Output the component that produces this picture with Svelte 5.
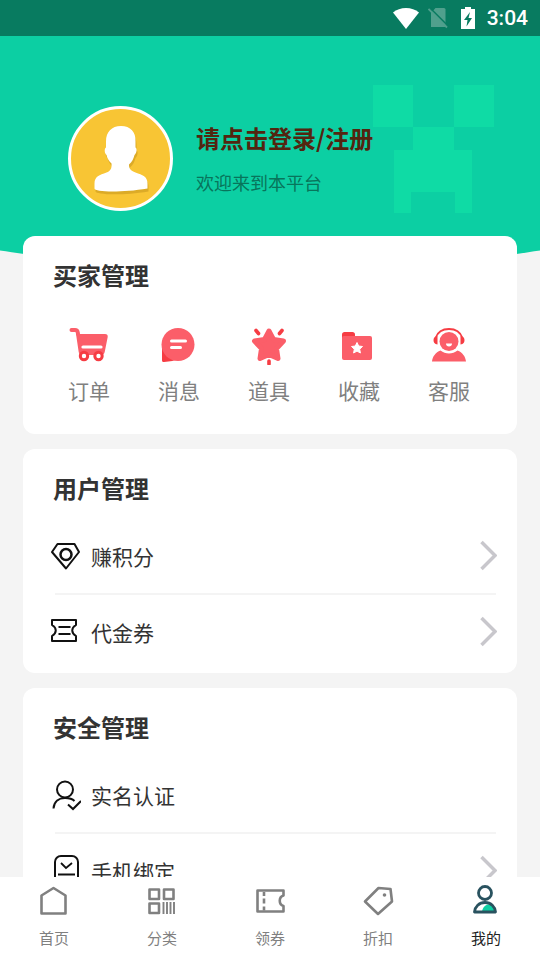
<script>
    let active = 'mine'

    const buyer = [
        {id: 'order', label: '订单'},
        {id: 'message', label: '消息'},
        {id: 'props', label: '道具'},
        {id: 'favorite', label: '收藏'},
        {id: 'service', label: '客服'}
    ]

    const sections = [
        {
            title: '用户管理',
            rows: [
                {id: 'points', label: '赚积分', arrow: true},
                {id: 'voucher', label: '代金券', arrow: true}
            ]
        },
        {
            title: '安全管理',
            rows: [
                {id: 'realname', label: '实名认证', arrow: false},
                {id: 'phone', label: '手机绑定', arrow: true}
            ]
        }
    ]

    const tabs = [
        {id: 'home', label: '首页'},
        {id: 'category', label: '分类'},
        {id: 'coupon', label: '领券'},
        {id: 'discount', label: '折扣'},
        {id: 'mine', label: '我的'}
    ]
</script>

<div class="app">
    <header class="status">
        <svg width="26" height="21" viewBox="0 0 26 21" aria-hidden="true">
            <path d="M0 4.5C3.5 1.5 8 0 13 0s9.5 1.5 13 4.5L13 21z" fill="#fff"/>
        </svg>
        <svg class="sim" width="21" height="22" viewBox="0 0 21 22" aria-hidden="true">
            <path d="M7.500 1H16a1.500 1.500 0 0 1 1.500 1.500V20H3V6z" fill="#50a08d"/>
            <path d="M1.500 .5l19 19" stroke="#087b60" stroke-width="1.600"/>
            <path d="M.5 2l18.500 18.500" stroke="#50a08d" stroke-width="1.800"/>
        </svg>
        <svg class="battery" width="14" height="22" viewBox="0 0 14 22" aria-hidden="true">
            <path d="M4 0h6v2h4v20H0V2h4z" fill="#fff"/>
            <path d="M9 5L3 13h3.500l-1 6.500L11 11H7.500z" fill="#087b60"/>
        </svg>
        <time>3:04</time>
    </header>

    <main>
        <section class="hero">
            <svg class="avatar" viewBox="0 0 105 105" role="img" aria-label="头像">
                <circle cx="52.5" cy="52.5" r="51" fill="#f8c534" stroke="#fff" stroke-width="3"/>
                <path transform="translate(1 3)" fill="#c99a20" opacity=".6" d="M52.5 20c-9.500 0-14.500 6-14.500 15.500v6c-2 1-1.500 6 .5 7.500 1 4 2.500 6 5 8.500.5 5-1 7.500-5 9-7 2.500-12 4-12 11v5c0 3 26 4.500 53 0v-5c0-7-5-8.500-12-11-5-2-6.500-4-6.500-8 3.500-3 4.500-6 5.500-9.500 2-1.500 3-6.500 1-7.500v-6C67.500 26 62 20 52.500 20z"/>
                <path fill="#fff" d="M53 20c-9.500 0-15 6-15 15.500v6c-2 1-1.500 6 .5 7.500 1 4 2.500 6 5 8.500.5 5-1 7.500-5 9-7 2.500-12 4-12 11v5c0 3.500 26 4.500 53 0v-5c0-7-5-8.500-12-11-5-2-6.500-4-6.500-8 3.500-3 4.500-6 5.500-9.500 2-1.500 3-6.500 1-7.500v-6C68 26 62.500 20 53 20z"/>
            </svg>
            <div class="intro">
                <a class="login" href="#login">请点击登录/注册</a>
                <p>欢迎来到本平台</p>
            </div>
            <svg class="creeper" width="121" height="128" viewBox="0 0 121 128" aria-hidden="true">
                <path fill="#0fdba5" d="M0 0h40v42h41V0h40v42H81v23h18v63H82v-21H38v21H21V65h19V42H0z"/>
            </svg>
        </section>

        <div class="cards">
            <section class="card">
                <h2>买家管理</h2>
                <div class="grid">
                    {#each buyer as item}
                        <button class="entry">
                            <svg width="40" height="40" viewBox="0 0 40 40" aria-hidden="true">
                                {#if item.id === 'order'}
                                    <path d="M2.500 5H6c1.500 0 2.500.8 2.800 2.500L9 9" fill="none" stroke="#fb5e69" stroke-width="4" stroke-linecap="round"/>
                                    <path d="M7 9h29c2 0 3 1.200 2.700 3l-3 15c-.4 2-1.700 3-3.700 3H13c-2 0-3-1-3.300-3z" fill="#fb5e69"/>
                                    <path d="M14 22h18" stroke="#fff" stroke-width="3.200" stroke-linecap="round"/>
                                    <circle cx="15" cy="31" r="3.700" fill="#fff" stroke="#f63c43" stroke-width="3"/>
                                    <circle cx="29.500" cy="31" r="3.700" fill="#fff" stroke="#f63c43" stroke-width="3"/>
                                {:else if item.id === 'message'}
                                    <path d="M3 19v16c0 1.500.7 2.200 2 2 6-.5 11-1 15-4z" fill="#f63c43"/>
                                    <circle cx="19" cy="19.500" r="16.500" fill="#fb5e69"/>
                                    <path d="M12.500 16h14M12.500 22.500h9" stroke="#fff" stroke-width="3" stroke-linecap="round"/>
                                {:else if item.id === 'props'}
                                    <path d="M20 6l4.500 8.500 10 1.500-7 7.500 1.500 10-9-4-9 4 1.500-10-7-7.500 10-1.500z" fill="#fb5e69" stroke="#fb5e69" stroke-width="5" stroke-linejoin="round"/>
                                    <path d="M7 5.500l2.500 3M33 5.500l-2.500 3M20 36v3" stroke="#f63c43" stroke-width="3.600" stroke-linecap="round"/>
                                {:else if item.id === 'favorite'}
                                    <path d="M3 13V9.500C3 8 4 7 5.500 7h8C15 7 16 8 16 9.500V13z" fill="#f63c43"/>
                                    <rect x="3" y="11" width="30" height="24" rx="2" fill="#fb5e69"/>
                                    <path d="M18 17.500l1.700 3.500 3.800.5-2.800 2.700.7 3.800-3.400-1.900-3.400 1.900.7-3.800-2.800-2.700 3.800-.5z" fill="#fff" stroke="#fff" stroke-linejoin="round"/>
                                {:else}
                                    <path d="M6.500 13C9 6 14 4 20 4S31 6 33.500 13" fill="none" stroke="#f63c43" stroke-width="1.800"/>
                                    <path d="M8.500 11v8.500C5.500 19 4.500 17.500 4.500 15s1.500-3.500 4-4zM31.500 11v8.500c3-.5 4-2 4-4.500s-1.500-3.500-4-4z" fill="#f63c43"/>
                                    <circle cx="20" cy="16.500" r="9.500" fill="#fb5e69"/>
                                    <path d="M17 18.500h6c0 1.800-1.200 3-3 3s-3-1.200-3-3z" fill="#fff"/>
                                    <path d="M3 36.500c.5-5 3.500-9 8.500-11 5 4 12 4 17 0 5 2 8 6 8.500 11z" fill="#fb5e69"/>
                                {/if}
                            </svg>
                            <span>{item.label}</span>
                        </button>
                    {/each}
                </div>
            </section>

            {#each sections as section}
                <section class="card">
                    <h2>{section.title}</h2>
                    <ul>
                        {#each section.rows as row}
                            <li>
                                <button class="row">
                                    <svg width="32" height="32" viewBox="0 0 32 32" fill="none" stroke="#111" stroke-width="2" aria-hidden="true">
                                        {#if row.id === 'points'}
                                            <path d="M8.500 4h17L30 12 17 28.500 3 12z" stroke-linejoin="round"/>
                                            <circle cx="17" cy="14.500" r="5.500" stroke-width="2.500"/>
                                        {:else if row.id === 'voucher'}
                                            <path d="M3 4h24v5c-5 3-5 8 0 11v5H3v-5c5-3 5-8 0-11z" stroke-linejoin="round"/>
                                            <path d="M9.500 11h12M9.500 18h12" stroke-width="1.800"/>
                                        {:else if row.id === 'realname'}
                                            <circle cx="16" cy="10.500" r="8"/>
                                            <path d="M4.500 29.500C5 22.500 10 19 16 19c4 0 7.500 1 9.500 3M19 25.500l5 4.500 8-8"/>
                                        {:else}
                                            <rect x="6" y="1" width="23" height="29" rx="6"/>
                                            <path d="M12 8l5 5L23 8M9 19.500h17" stroke-width="1.800"/>
                                        {/if}
                                    </svg>
                                    <span>{row.label}</span>
                                    {#if row.arrow}
                                        <svg class="arrow" width="18" height="32" viewBox="0 0 18 32" aria-hidden="true">
                                            <path d="M2.500 2L16 15.500 2.500 29" fill="none" stroke="#c8c7cc" stroke-width="3.500"/>
                                        </svg>
                                    {/if}
                                </button>
                            </li>
                        {/each}
                    </ul>
                </section>
            {/each}
        </div>
    </main>

    <nav>
        {#each tabs as tab}
            <button class="tab" class:active={active === tab.id} on:click={() => active = tab.id}>
                <svg width="32" height="32" viewBox="0 0 32 32" fill="none" stroke="#808080" stroke-width="2.600" aria-hidden="true">
                    {#if tab.id === 'home'}
                        <path d="M3.500 10.500L15.500 3l12 7.500V28.500h-24z" stroke-linejoin="round"/>
                    {:else if tab.id === 'category'}
                        <path d="M3.500 4.500h9.500v9.500H3.500zM18 4.500h9.500v9.500H18zM3.500 18.500h9.500v9.500H3.500z" stroke-linejoin="round"/>
                        <path d="M17.500 17v12M21 17v12M24.500 17v12M28 17v12" stroke-width="1.900"/>
                    {:else if tab.id === 'coupon'}
                        <path d="M3.500 5.500h26v5c-5 1.500-5 9 0 10.500v5.500h-26z" stroke-linejoin="round"/>
                        <path d="M10 7v4M10 13.500v5M10 21.500v4"/>
                    {:else if tab.id === 'discount'}
                        <path d="M16.500 3l12 1 1.500 12.500L16 29 3 16.500z" stroke-linejoin="round"/>
                        <circle cx="22.500" cy="10" r="1.800" fill="#808080" stroke="none"/>
                    {:else}
                        <path d="M12 27.500c0-5 4-9 9-8.500 3 2 4.500 5 4.500 8.500z" fill="#0ecfa3" stroke="none"/>
                        <circle cx="15" cy="8" r="6.500" stroke="#29525f" stroke-width="2.800"/>
                        <path d="M4.500 27C5 21.500 9 17.500 15 17.500S25 21.500 25.500 27z" stroke="#29525f" stroke-width="2.800" stroke-linejoin="round"/>
                    {/if}
                </svg>
                <span>{tab.label}</span>
            </button>
        {/each}
    </nav>
</div>

<style>
    :global(body) {
        background-color: #f4f4f4;
    }

    .app {
        display: flex;
        flex-direction: column;
        height: 100vh;
        font-family: "Noto Sans CJK SC", sans-serif;
        color: #333;
    }

    button {
        padding: 0;
        border: none;
        background: none;
        font: inherit;
        color: inherit;
        cursor: pointer;
    }

    svg {
        flex: none;
        display: block;
    }

    .status {
        display: flex;
        flex: none;
        justify-content: flex-end;
        align-items: center;
        height: 36px;
        padding-right: 12px;
        background-color: #087b60;
        color: #fff;
        font: 500 21px/36px Roboto, sans-serif;
    }

    .sim {
        margin-left: 9px;
    }

    .battery {
        margin: 0 12px;
    }

    main {
        flex: 1;
        min-height: 0;
        overflow-y: auto;
        scrollbar-width: none;
    }

    .hero {
        display: flex;
        align-items: flex-start;
        box-sizing: border-box;
        height: 234px;
        padding: 49px 47px 0 68px;
        background-color: #0ccfa3;
        clip-path: ellipse(125% 100% at 50% 0);
    }

    .avatar {
        width: 105px;
        height: 105px;
        margin-top: 21px;
    }

    .intro {
        margin: 35px 0 0 23px;
        white-space: nowrap;
    }

    .login {
        display: block;
        color: #532510;
        font-size: 24px;
        font-weight: 700;
        line-height: 36px;
        text-decoration: none;
    }

    .intro p {
        margin: 12px 0 0;
        color: #08755b;
        font-size: 18px;
        line-height: 28px;
    }

    .creeper {
        margin-left: auto;
    }

    .cards {
        position: relative;
        display: flex;
        flex-direction: column;
        gap: 15px;
        margin-top: -34px;
        padding: 0 23px 15px;
    }

    .card {
        padding: 19px 20px 3px;
        border-radius: 12px;
        background-color: #fff;
    }

    h2 {
        margin: 0 0 10px 10px;
        font-size: 24px;
        font-weight: 700;
        line-height: 40px;
    }

    .grid {
        display: grid;
        grid-template-columns: repeat(5, 1fr);
        margin: 0 3px 0 1px;
        padding: 20px 0 25px;
    }

    .entry {
        display: flex;
        flex-direction: column;
        align-items: center;
        gap: 9px;
        color: #808080;
        font-size: 21px;
        line-height: 32px;
    }

    ul {
        margin: 0;
        padding: 0;
        list-style: none;
    }

    li + li::before {
        content: "";
        display: block;
        height: 2px;
        margin: 0 1px 0 12px;
        background-color: #f4f4f4;
    }

    .row {
        display: flex;
        align-items: center;
        width: 100%;
        height: 75px;
        padding-left: 6px;
        font-size: 21px;
        line-height: 32px;
    }

    li + li .row {
        height: 73px;
        margin-bottom: 2px;
    }

    .row span {
        margin-left: 10px;
    }

    .arrow {
        margin-left: auto;
    }

    nav {
        display: flex;
        flex: none;
        height: 83px;
        background-color: #fff;
    }

    .tab {
        display: flex;
        flex: 1;
        flex-direction: column;
        align-items: center;
        gap: 10px;
        padding-top: 8px;
        color: #808080;
        font-size: 15px;
        line-height: 22px;
    }

    .tab.active {
        color: #222;
    }
</style>
